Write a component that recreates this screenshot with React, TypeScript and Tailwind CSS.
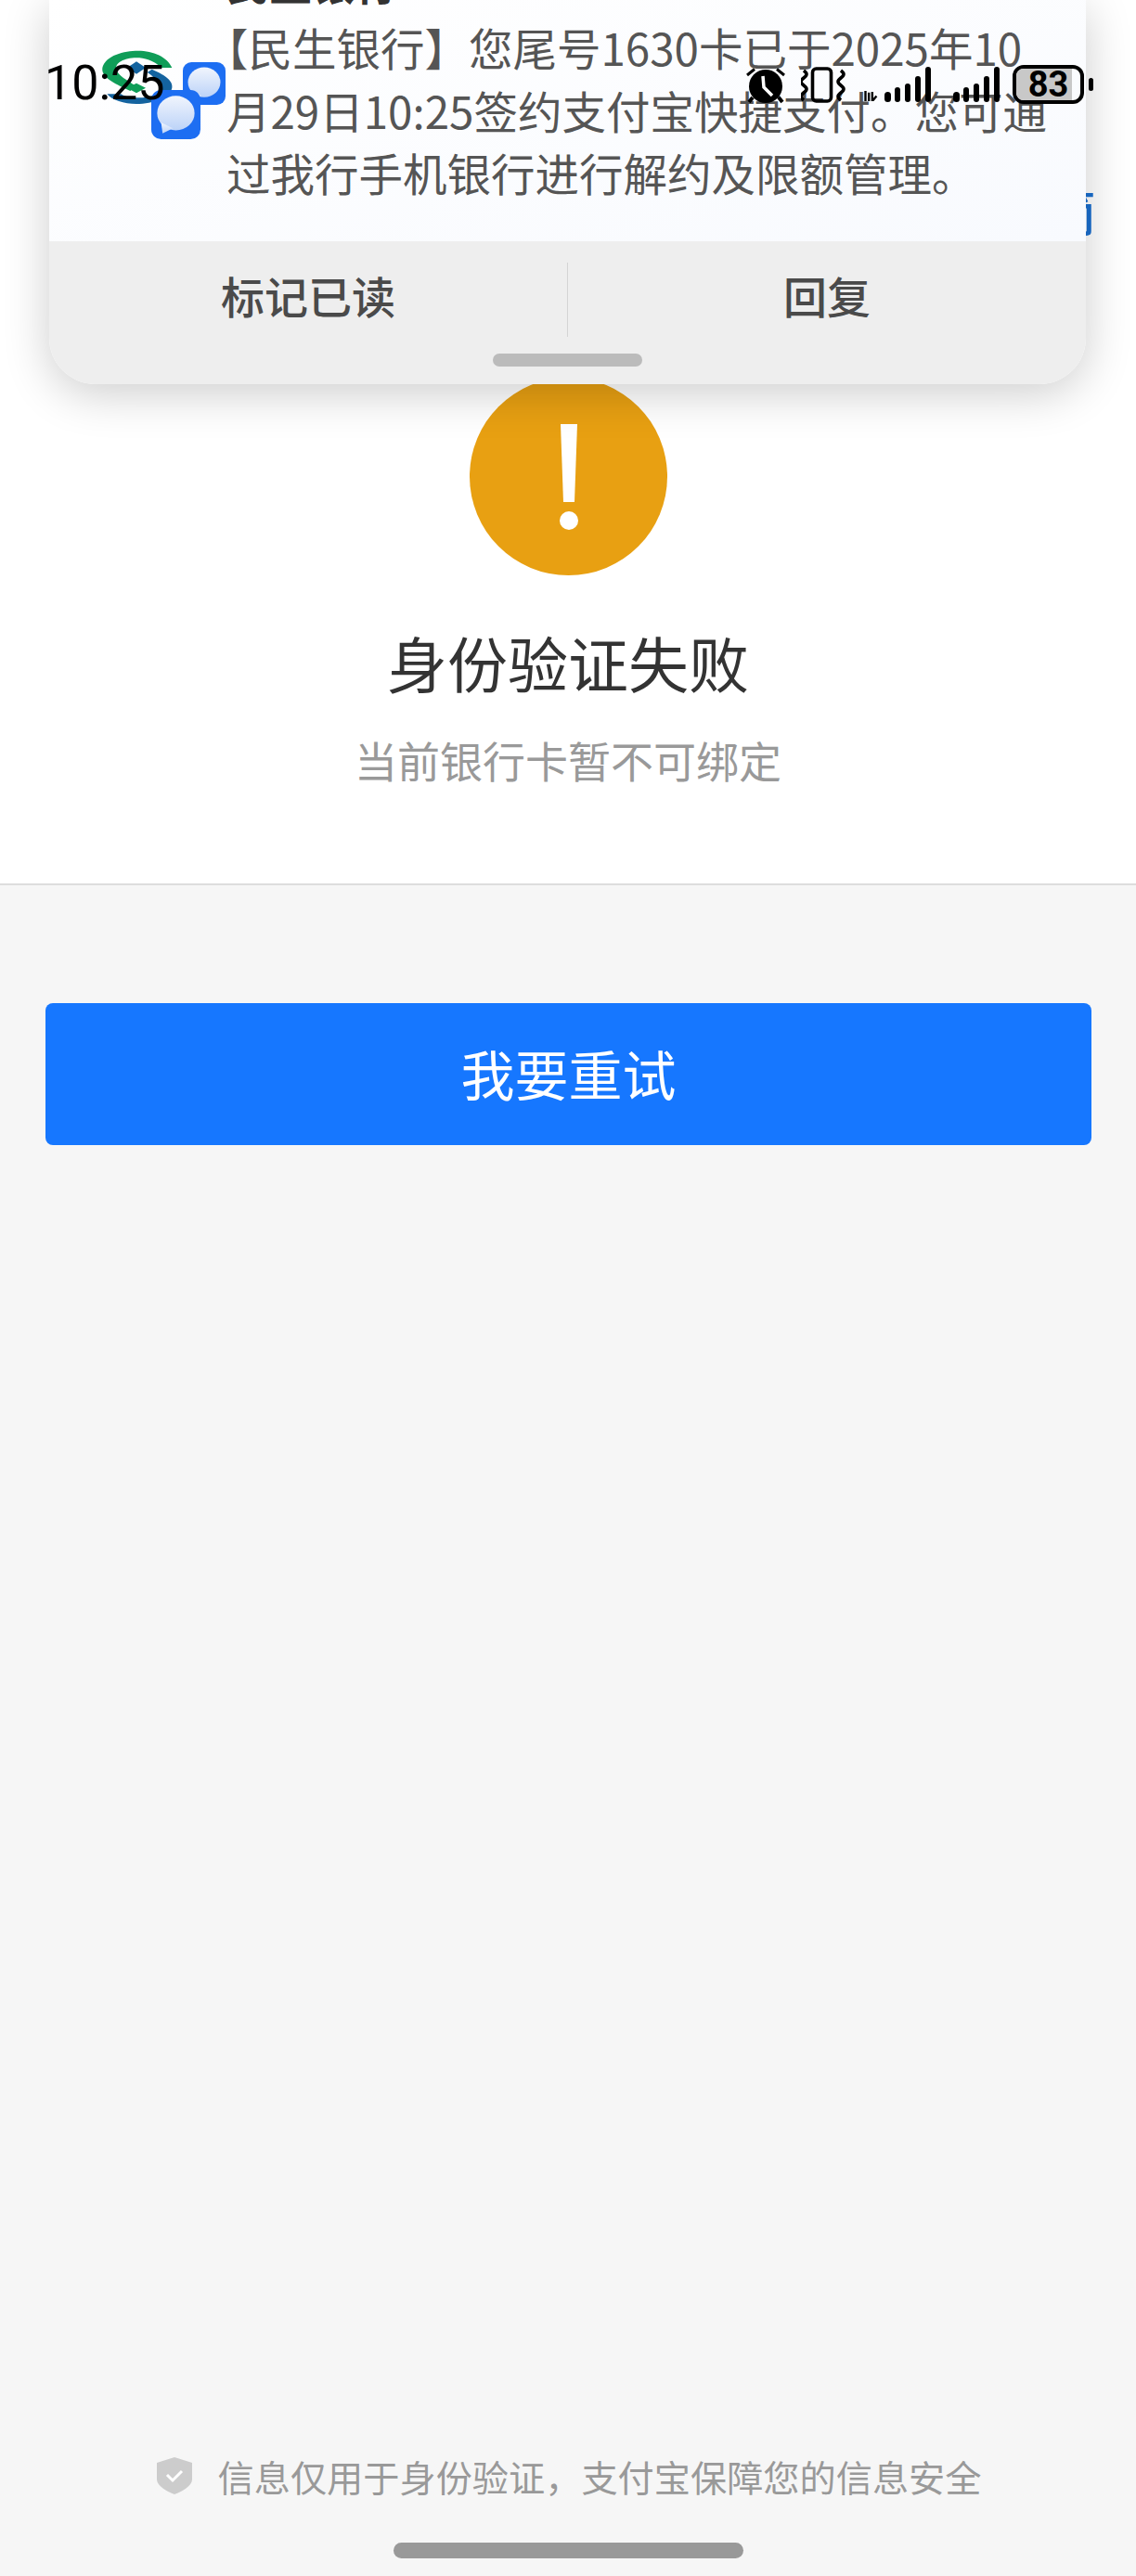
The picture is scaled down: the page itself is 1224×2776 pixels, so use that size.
import React from 'react';

const CJK = "font-['Noto_Sans_CJK_SC','Noto_Sans',sans-serif]";

const MESSAGE_LINES = [
  '【民生银行】您尾号1630卡已于2025年10',
  '月29日10:25签约支付宝快捷支付。您可通',
  '过我行手机银行进行解约及限额管理。',
];

function BankLogo() {
  return (
    <svg viewBox="50 40 240 180" className="absolute left-[107px] top-[53px] h-[60px] w-[80px]">
      <path
        d="M60 100C70 60 130 45 175 45C225 45 270 65 285 100L250 100C225 75 195 68 170 68C130 68 100 85 105 105C110 125 140 140 170 160L150 175C110 155 55 135 60 100Z"
        fill="#0f9d58"
      />
      <path
        d="M75 185L120 185C135 195 155 197 175 197C215 197 250 185 245 160C240 140 220 125 205 115L220 105C255 120 290 140 285 165C280 195 225 217 170 217C130 217 90 205 75 185Z"
        fill="#14639f"
      />
      <path d="M170 80L200 100L170 120L140 100Z" fill="#14639f" />
      <path d="M170 150L200 165L170 182L140 165Z" fill="#0f9d58" />
    </svg>
  );
}

function MessageIcon({ id, className }: { id: string; className: string }) {
  return (
    <svg viewBox="0 0 100 100" className={className}>
      <defs>
        <linearGradient id={id} x1="0" y1="0" x2="0" y2="1">
          <stop offset="0" stopColor="#f1f5fd" />
          <stop offset="1" stopColor="#bcd3f8" />
        </linearGradient>
      </defs>
      <rect width="100" height="100" rx="20" fill="#1d6ef2" />
      <ellipse cx="50" cy="47" rx="38" ry="35" fill={`url(#${id})`} />
      <path d="M20 66L23 88L44 78Z" fill={`url(#${id})`} />
    </svg>
  );
}

function AlarmIcon() {
  return (
    <svg viewBox="0 0 44 40" className="h-[40px] w-[44px]">
      <path d="M2 9L10 2.5" stroke="#000" strokeWidth="3" fill="none" />
      <path d="M34 2.5L42 9" stroke="#000" strokeWidth="3" fill="none" />
      <path d="M8 33L4 38M36 33L40 38" stroke="#000" strokeWidth="4" />
      <circle cx="22" cy="21" r="18" fill="#000" />
      <path d="M19 10L20 22L29 31" stroke="#fff" strokeWidth="3.5" fill="none" />
    </svg>
  );
}

function VibrateIcon() {
  const squiggle = 'M4 2C8 5 8 7 4 10C0 13 0 15 4 18C8 21 8 23 4 26C0 29 0 31 4 34';
  return (
    <svg viewBox="0 0 48 40" className="h-[40px] w-[48px]">
      <path d={squiggle} transform="translate(-1 2)" stroke="#000" strokeWidth="3.6" fill="none" />
      <rect x="12.5" y="2" width="20" height="35" rx="4" stroke="#000" strokeWidth="3.6" fill="none" />
      <path d={squiggle} transform="translate(39 2)" stroke="#000" strokeWidth="3.6" fill="none" />
    </svg>
  );
}

function SignalBars({ heights }: { heights: number[] }) {
  return (
    <div className="flex h-[38px] items-end gap-[4.4px]">
      {heights.map((h, i) => (
        <div key={i} className="w-[6.5px] rounded-full bg-black" style={{ height: h }} />
      ))}
    </div>
  );
}

function Battery() {
  return (
    <div className="flex items-center gap-[5px]">
      <div className="relative h-[42px] w-[77px] overflow-hidden rounded-[12px] border-[4px] border-black">
        <div className="h-full w-[87%] bg-[#c8c8c8]" />
        <span className="absolute inset-0 flex items-center justify-center font-['Roboto',sans-serif] text-[38px] font-bold leading-none text-black">
          83
        </span>
      </div>
      <div className="h-[14px] w-[5px] rounded-full bg-black" />
    </div>
  );
}

function StatusBar() {
  return (
    <div className="absolute inset-x-0 top-[70px] h-[42px]">
      <span className="absolute left-[48px] top-[-10px] font-['Roboto',sans-serif] text-[52px] leading-[60px] text-black">
        10:25
      </span>
      <div className="absolute left-[803px] top-0 flex items-end">
        <AlarmIcon />
        <div className="ml-[16px]">
          <VibrateIcon />
        </div>
        <div className="mb-[2px] ml-[19px] flex items-end">
          <svg viewBox="0 0 16 12" className="mb-[1px] mr-[7px] h-[11px] w-[16px]">
            <path d="M2 0V12M6 2V12M10 1V12L15 6" stroke="#000" strokeWidth="2.6" fill="none" />
          </svg>
          <SignalBars heights={[11, 16, 20, 28, 38]} />
        </div>
        <div className="mb-[2px] ml-[24px]">
          <SignalBars heights={[11, 16, 20, 28, 38]} />
        </div>
        <div className="ml-[14px]">
          <Battery />
        </div>
      </div>
    </div>
  );
}

function NotificationCard() {
  return (
    <div className="absolute left-[53px] top-0 flex h-[414px] w-[1117px] flex-col overflow-hidden rounded-b-[50px] shadow-[0_10px_50px_rgba(0,0,0,0.2)]">
      <div className="h-[260px] bg-gradient-to-br from-white to-[#f8fafe] pl-[191px]">
        <p className="mt-[-45px] text-[46px] font-bold leading-[50px] text-[#333]">民生银行</p>
        <div className="mt-[12px] text-[47.5px] leading-[67.5px] text-[#555]">
          {MESSAGE_LINES.map((line, i) => (
            <p key={i} className={`whitespace-nowrap ${i === 0 ? 'ml-[-24px]' : ''}`}>
              {line}
            </p>
          ))}
        </div>
      </div>
      <div className="relative flex h-[154px] bg-[#eeeeee] pb-[38px] text-[47px] font-medium text-[#4a4a4a]">
        <button className="flex-1 text-center">标记已读</button>
        <div className="mb-[13px] mt-[23px] w-px bg-[#d4d4d4]" />
        <button className="flex-1 text-center">回复</button>
        <div className="absolute bottom-[19px] left-[478px] h-[14px] w-[161px] rounded-full bg-[#bbbbbb]" />
      </div>
    </div>
  );
}

export default function App() {
  return (
    <div className={`relative flex h-[2776px] w-[1224px] flex-col overflow-hidden bg-[#f6f6f6] ${CJK}`}>
      <div className="flex h-[954px] flex-col items-center border-b-2 border-[#dddddd] bg-white pt-[407px]">
        <svg viewBox="0 0 213 213" className="h-[213px] w-[213px] shrink-0">
          <circle cx="106.5" cy="106.5" r="106.5" fill="#e8a012" />
          <path d="M98 50H116L113 134H101Z" fill="#fff" />
          <circle cx="107" cy="154" r="10" fill="#fff" />
        </svg>
        <h1 className="mt-[48px] text-[65px] font-normal leading-[90px] text-[#333]">身份验证失败</h1>
        <p className="mt-[30px] text-[46px] leading-[60px] text-[#999]">当前银行卡暂不可绑定</p>
      </div>

      <div className="pl-[49px] pr-[48px] pt-[127px]">
        <button className="h-[153px] w-full rounded-[8px] bg-[#1677ff] pb-[2px] text-[58px] text-white">我要重试</button>
      </div>

      <div className="mt-auto flex flex-col items-center pb-[19px]">
        <div className="ml-[2px] flex items-center gap-[28px]">
          <svg viewBox="0 0 38 40" className="h-[40px] w-[38px]">
            <path d="M19 0L38 6V24C38 31 27 37 19 40C11 37 0 31 0 24V6Z" fill="#cccccc" />
            <path d="M11 19L17 25L27 15" stroke="#fff" strokeWidth="3" fill="none" />
          </svg>
          <p className="text-[39.2px] leading-[50px] text-[#999]">信息仅用于身份验证，支付宝保障您的信息安全</p>
        </div>
        <div className="mt-[47px] h-[17px] w-[377px] rounded-full bg-[#999999]" />
      </div>

      {/* text of the page underneath, only its edge shows past the card */}
      <span className="absolute left-[1127px] top-[195px] text-[54px] font-medium leading-[64px] text-[#1a6fd0]">简</span>

      <NotificationCard />
      <BankLogo />
      <MessageIcon id="bubble-small" className="absolute left-[197px] top-[67px] h-[46px] w-[46px]" />
      <MessageIcon id="bubble-large" className="absolute left-[163px] top-[97px] h-[53px] w-[53px]" />
      <StatusBar />
    </div>
  );
}
